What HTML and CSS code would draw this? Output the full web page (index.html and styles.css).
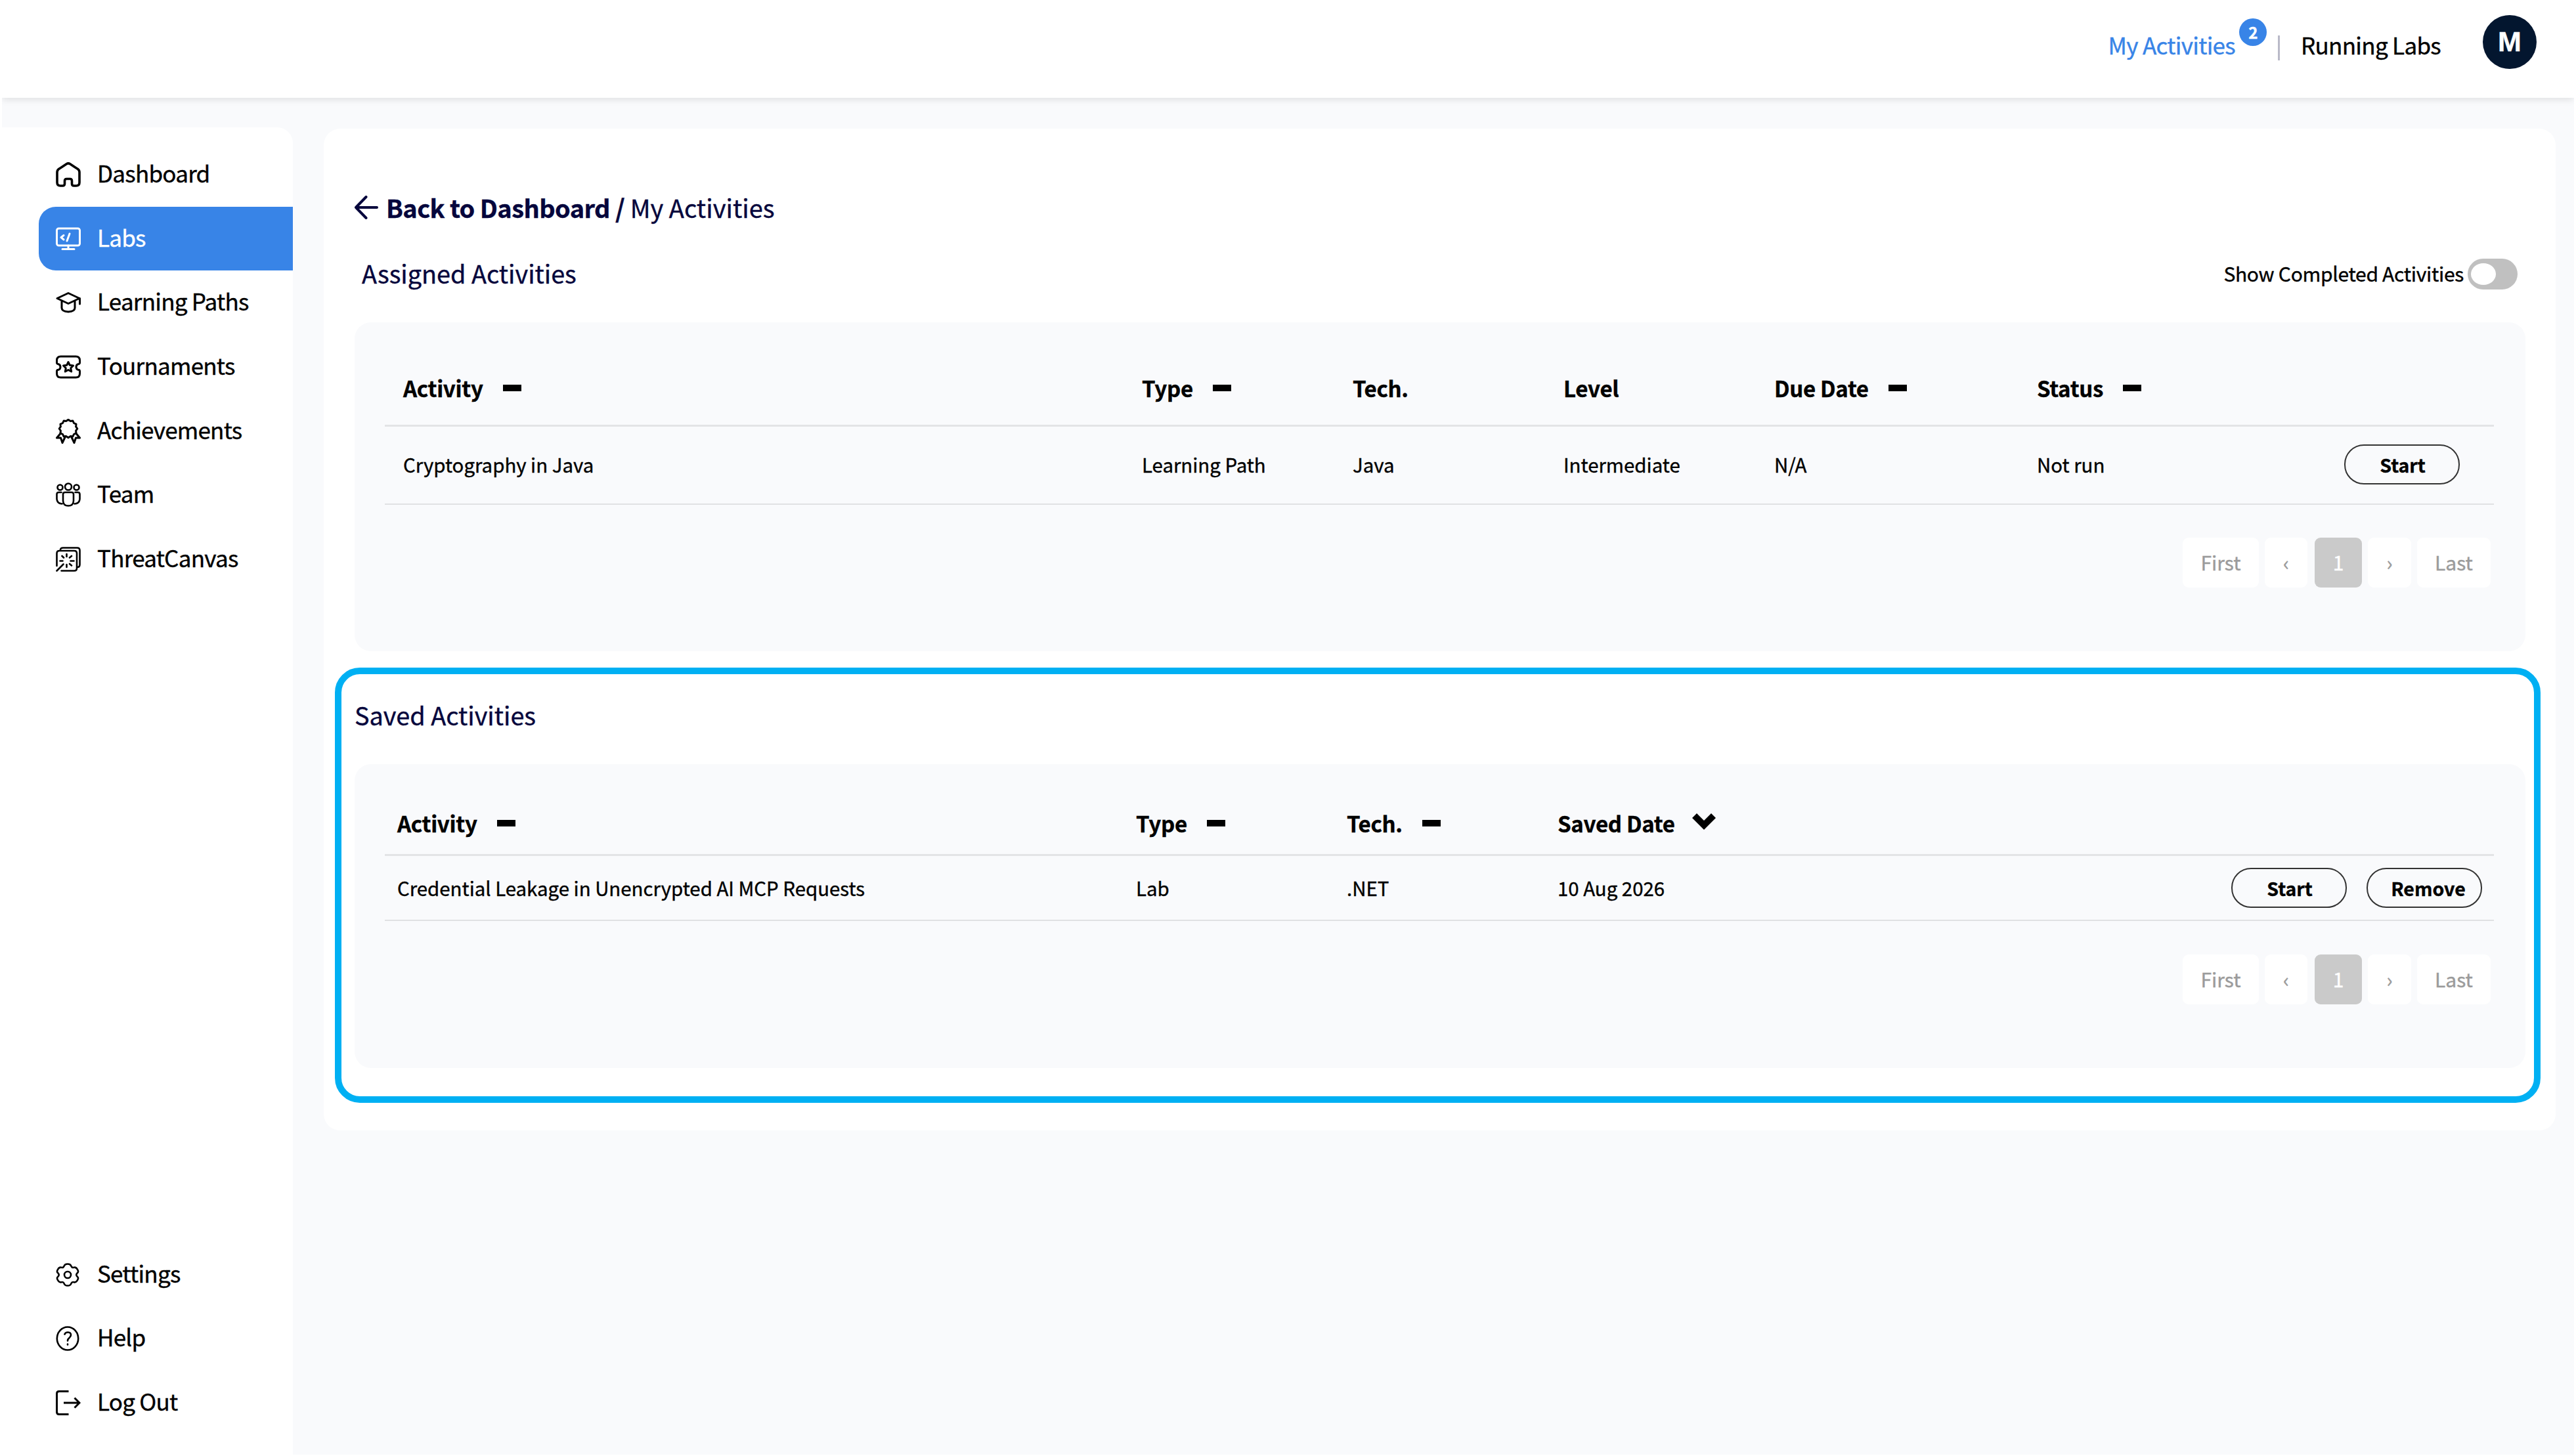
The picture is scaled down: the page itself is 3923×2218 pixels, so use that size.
FILE: index.html
```html
<!DOCTYPE html>
<html lang="en">
  <head>
    <meta charset="UTF-8">
    <title>My Activities</title>
    <link rel="stylesheet" href="styles.css">
  </head>
  <body>
    <header class="topbar">
      <a class="top-link current"><span>My Activities</span><span class="badge">2</span></a>
      <span class="divider"></span>
      <a class="top-link">Running Labs</a>
      <span class="avatar">M</span>
    </header>

    <div class="layout">
      <nav class="sidebar">
        <ul class="menu">
          <li class="item">
            <svg class="icon bold" viewBox="0 0 38 38"><path d="M16.300 2.800L4.500 10.600Q2 12.300 2 15.500V31Q2 36 7 36H10.500Q13.500 36 13.500 33V28.500Q13.500 25.500 16.500 25.500H21.500Q24.500 25.500 24.500 28.500V33Q24.500 36 27.500 36H31Q36 36 36 31V15.500Q36 12.300 33.500 10.600L21.700 2.800Q19 1.100 16.300 2.800Z"/></svg>
            <span class="label">Dashboard</span>
          </li>
          <li class="item active">
            <svg class="icon" viewBox="0 0 38 38"><rect x="1.500" y="3" width="35" height="26" rx="3"/><path d="M19 29V34M10 34.500H28M12 13.500L8 16.700L12 20M21 11L17 22"/></svg>
            <span class="label">Labs</span>
          </li>
          <li class="item">
            <svg class="icon" viewBox="0 0 38 38"><path d="M19 4.500L2 12.500L19 20.500L36 12.500ZM36.500 12.500V21M9 16V27Q9 32.500 19 33Q29 32.500 29 27V16"/></svg>
            <span class="label">Learning Paths</span>
          </li>
          <li class="item">
            <svg class="icon" viewBox="0 0 38 38"><path d="M7.500 3H30.500Q36.500 3 36.500 9V12.500Q36.500 14.500 34 14.700Q31 15.500 31 19Q31 22.500 34 23.300Q36.500 23.500 36.500 25.500V29Q36.500 35 30.500 35H7.500Q1.500 35 1.500 29V25.500Q1.500 23.500 4 23.300Q7 22.500 7 19Q7 15.500 4 14.700Q1.500 14.500 1.500 12.500V9Q1.500 3 7.500 3Z"/><path d="M19 11.500L21.300 16.300L26.500 17L22.700 20.700L23.700 26L19 23.500L14.300 26L15.300 20.700L11.500 17L16.700 16.300Z"/></svg>
            <span class="label">Tournaments</span>
          </li>
          <li class="item">
            <svg class="icon" viewBox="0 0 38 38"><path transform="translate(19 15)" d="M0 -13.800L3.100 -11.600L6.900 -12L8.500 -8.500L12 -6.900L11.600 -3.100L13.800 0L11.600 3.100L12 6.900L8.500 8.500L6.900 12L3.100 11.600L0 13.800L-3.100 11.600L-6.900 12L-8.500 8.500L-12 6.900L-11.600 3.100L-13.800 0L-11.600 -3.100L-12 -6.900L-8.500 -8.500L-6.900 -12L-3.100 -11.600Z"/><path d="M7 22.500L1.500 29L7.500 29L10 36.500L14.500 27M31 22.500L36.500 29L30.500 29L28 36.500L23.500 27"/></svg>
            <span class="label">Achievements</span>
          </li>
          <li class="item">
            <svg class="icon thin" viewBox="0 0 38 38"><circle cx="19" cy="6.500" r="5"/><circle cx="6.500" cy="7.500" r="4"/><circle cx="31.500" cy="7.500" r="4"/><path d="M14 15H24Q27 15 27 18V28Q26.500 35.500 19 35.500Q11.500 35.500 11 28V18Q11 15 14 15ZM8.500 15H4.500Q1.500 15 1.500 18V25Q2 32 9.500 32.500M29.500 15H33.500Q36.500 15 36.500 18V25Q36 32 28.500 32.500"/></svg>
            <span class="label">Team</span>
          </li>
          <li class="item">
            <svg class="icon thin" viewBox="0 0 38 38"><path d="M1.500 29V10Q1.500 6 5.500 6H28Q32 6 32 10V32.500Q32 36.500 28 36.500H8.500M7 4.500Q7 1.500 11 1.500H32.500Q36.500 1.500 36.500 5.500V27Q36.500 31 33 31M1.500 36.500L11.500 26.500M16.500 11V15M16.500 27V31M6.500 21.500H10.500M22.500 21.500H27.500M9.500 14L12 16.500M21 26L24 28.500M21 16.500L24 14"/></svg>
            <span class="label">ThreatCanvas</span>
          </li>
        </ul>
        <ul class="menu">
          <li class="item">
            <svg class="icon thin" viewBox="0 0 38 38"><path transform="translate(18 19)" d="M-5.500 -13Q-4.500 -16.500 0 -16.500Q4.500 -16.500 5.500 -13Q6.500 -10.500 9.500 -11.200Q13 -12 15 -8Q17.300 -4.500 14.500 -2.500Q12 0 14.500 2.500Q17.300 4.500 15 8Q13 12 9.500 11.200Q6.500 10.500 5.500 13Q4.500 16.500 0 16.500Q-4.500 16.500 -5.500 13Q-6.500 10.500 -9.500 11.200Q-13 12 -15 8Q-17.300 4.500 -14.500 2.500Q-12 0 -14.500 -2.500Q-17.300 -4.500 -15 -8Q-13 -12 -9.500 -11.200Q-6.500 -10.500 -5.500 -13Z"/><circle cx="18" cy="19" r="5"/></svg>
            <span class="label">Settings</span>
          </li>
          <li class="item">
            <svg class="icon thin" viewBox="0 0 38 38"><ellipse cx="18" cy="19" rx="16.200" ry="17.500"/><path d="M13.500 12.500Q14.500 9.500 18.500 9.500Q23 9.800 23 13.500Q23 16 20.500 18Q18 20 18 22.500M18 27.500V28.500"/></svg>
            <span class="label">Help</span>
          </li>
          <li class="item">
            <svg class="icon" viewBox="0 0 38 38"><path class="square" d="M19.500 1.500H5Q1.500 1.500 1.500 5V33Q1.500 36.500 5 36.500H19.500M12 19H36M28.500 11.500L36 19L28.500 26.500"/></svg>
            <span class="label">Log Out</span>
          </li>
        </ul>
      </nav>

      <main class="card">
        <div class="crumbs">
          <svg class="back" viewBox="0 0 36 36"><path d="M34 18H2M17.500 2L2 18L17.500 34"/></svg>
          <b class="crumb-link">Back to Dashboard</b>
          <b class="slash">/</b>
          <span>My Activities</span>
        </div>

        <div class="section-head">
          <h2 class="title">Assigned Activities</h2>
          <div class="switch-row"><span class="switch-label">Show Completed Activities</span><span class="switch"><span class="knob"></span></span></div>
        </div>
        <section class="panel assigned">
          <table class="grid">
            <colgroup><col class="c-name"><col class="c-mid"><col class="c-mid"><col class="c-mid"><col class="c-due"><col></colgroup>
            <tr>
              <th>Activity<i class="dash"></i></th>
              <th>Type<i class="dash"></i></th>
              <th>Tech.</th>
              <th>Level</th>
              <th>Due Date<i class="dash"></i></th>
              <th>Status<i class="dash"></i></th>
            </tr>
            <tr>
              <td>Cryptography in Java</td>
              <td>Learning Path</td>
              <td>Java</td>
              <td>Intermediate</td>
              <td>N/A</td>
              <td><div class="last-cell"><span>Not run</span><button class="btn">Start</button></div></td>
            </tr>
          </table>
          <div class="pager">
            <span class="page first">First</span>
            <span class="page prev">‹</span>
            <span class="page on">1</span>
            <span class="page next">›</span>
            <span class="page last">Last</span>
          </div>
        </section>

        <div class="highlight">
          <h2 class="title">Saved Activities</h2>
          <section class="panel saved">
            <table class="grid">
              <colgroup><col class="c-name"><col class="c-mid"><col class="c-mid"><col></colgroup>
              <tr>
                <th>Activity<i class="dash"></i></th>
                <th>Type<i class="dash"></i></th>
                <th>Tech.<i class="dash"></i></th>
                <th>Saved Date<svg class="chevron" viewBox="0 0 36 25"><path d="M0 7L7 0L18 11L29 0L36 7L18 25Z"/></svg></th>
              </tr>
              <tr>
                <td>Credential Leakage in Unencrypted AI MCP Requests</td>
                <td>Lab</td>
                <td>.NET</td>
                <td><div class="last-cell"><span>10 Aug 2026</span><span class="actions"><button class="btn">Start</button><button class="btn remove">Remove</button></span></div></td>
              </tr>
            </table>
            <div class="pager">
              <span class="page first">First</span>
              <span class="page prev">‹</span>
              <span class="page on">1</span>
              <span class="page next">›</span>
              <span class="page last">Last</span>
            </div>
          </section>
        </div>
      </main>
    </div>
  </body>
</html>
```
FILE: styles.css
```css
* {
  box-sizing: border-box;
}
html {
  background: #fff;
}
body {
  margin: 0 3px;
  height: 2216px;
  background: #f9fafc;
  color: #000;
  font-family: "Noto Sans CJK SC", "Noto Sans", sans-serif;
  font-size: 35px;
  line-height: 40px;
  -webkit-text-stroke: 0.4px;
}
.topbar {
  display: flex;
  align-items: flex-start;
  justify-content: flex-end;
  height: 149px;
  padding-right: 57px;
  background: #fff;
  box-shadow: 0 3px 10px rgba(0, 0, 0, 0.1);
}
.top-link {
  display: flex;
  padding-top: 48px;
  letter-spacing: -0.7px;
}
.current {
  color: #3884e7;
}
.badge {
  width: 42px;
  height: 42px;
  margin: -20px 0 0 6px;
  border-radius: 50%;
  background: #3884e7;
  color: #fff;
  font-size: 24px;
  font-weight: 700;
  line-height: 42px;
  text-align: center;
}
.divider {
  width: 3px;
  height: 38px;
  margin: 54px 32px 0 17px;
  background: #b9b9c8;
}
.avatar {
  width: 82px;
  height: 82px;
  margin: 23px 0 0 64px;
  border-radius: 50%;
  background: #03162f;
  color: #fff;
  font: bold 43px/80px "Liberation Sans", Arial, sans-serif;
  text-align: center;
}

.layout {
  display: flex;
  align-items: flex-start;
}
.sidebar {
  display: flex;
  flex-direction: column;
  justify-content: space-between;
  width: 443px;
  height: 2022px;
  margin-top: 45px;
  padding: 23px 0 30px 56px;
  border-top-right-radius: 24px;
  background: #fff;
}
.menu {
  margin: 0;
  padding: 0;
  list-style: none;
}
.item {
  display: flex;
  align-items: center;
  height: 97.7px;
  padding-left: 26px;
}
.active {
  border-radius: 26px 0 0 26px;
  background: #3884e7;
  color: #fff;
}
.icon {
  width: 38px;
  height: 38px;
  margin-right: 25px;
  fill: none;
  stroke: currentColor;
  stroke-width: 3;
  stroke-linecap: round;
  stroke-linejoin: round;
}
.icon.bold {
  stroke-width: 3.6;
}
.icon.thin {
  stroke-width: 2.6;
}
.square {
  stroke-linecap: butt;
  stroke-linejoin: miter;
}
.label {
  padding-bottom: 6px;
  letter-spacing: -0.75px;
}

.card {
  width: 3399px;
  height: 1526px;
  margin: 47px 0 0 47px;
  padding: 99px 23px 0 17px;
  border-radius: 25px;
  background: #fff;
}
.crumbs {
  display: flex;
  align-items: center;
  height: 41px;
  padding-left: 30px;
  color: #06063c;
  font-size: 38px;
}
.back {
  width: 36px;
  height: 36px;
  margin-right: 12px;
  fill: none;
  stroke: currentColor;
  stroke-width: 4;
  stroke-linecap: round;
  stroke-linejoin: round;
}
.crumb-link {
  letter-spacing: -0.6px;
}
.slash {
  margin: 0 8px;
}
.section-head {
  display: flex;
  align-items: center;
  justify-content: space-between;
  height: 50px;
  margin-top: 56px;
  padding: 0 35px 0 41px;
}
.title {
  margin: 0;
  padding-bottom: 2px;
  color: #06063c;
  font-size: 37.8px;
  font-weight: 400;
}
.switch-row {
  display: flex;
  align-items: center;
  gap: 6px;
  font-size: 30px;
}
.switch-label {
  padding-bottom: 3px;
  letter-spacing: -0.3px;
}
.switch {
  width: 76px;
  height: 47px;
  padding: 7px 5px;
  border-radius: 24px;
  background: #c0c0c0;
}
.knob {
  display: block;
  width: 38px;
  height: 33px;
  border-radius: 50%;
  background: #fff;
}

.panel {
  padding: 56px 48px 0 46px;
  border-radius: 25px;
  background: #f9fafc;
}
.assigned {
  width: 3306px;
  height: 501px;
  margin: 49px 0 0 30px;
}
.grid {
  width: 100%;
  table-layout: fixed;
  border-spacing: 0;
  text-align: left;
}
.c-name {
  width: 1125px;
}
.c-mid {
  width: 321px;
}
.c-due {
  width: 400px;
}
th {
  height: 103px;
  padding: 24px 0 36px 28px;
  border-bottom: 3px solid #e3e4e6;
  font-size: 33px;
  font-weight: 700;
  letter-spacing: -0.3px;
}
td {
  height: 119px;
  padding: 0 0 3px 28px;
  border-bottom: 2px solid #e0e1e3;
  font-size: 29.4px;
}
.dash {
  display: inline-block;
  width: 28px;
  height: 10px;
  margin-left: 30px;
  background: #000;
  vertical-align: 9px;
}
.chevron {
  width: 36px;
  height: 25px;
  margin-left: 26px;
  vertical-align: 4px;
}
.last-cell {
  display: flex;
  align-items: center;
  justify-content: space-between;
  padding-right: 52px;
}
.actions {
  display: flex;
  gap: 30px;
}
.btn {
  width: 176px;
  height: 61px;
  padding: 0 0 0 2px;
  border: 2px solid #333;
  border-radius: 30px;
  background: none;
  color: #000;
  font: bold 28.5px/55px "Noto Sans CJK SC", sans-serif;
}
.remove {
  padding-left: 12px;
}

.pager {
  display: flex;
  margin-top: 50px;
  justify-content: flex-end;
  padding-right: 5px;
  color: #9b9b9b;
  font-size: 30px;
  line-height: 75px;
  text-align: center;
}
.page {
  height: 76px;
  border-radius: 9px;
  background: #fff;
}
.first {
  width: 116px;
  margin-right: 9px;
}
.prev {
  width: 65px;
  margin-right: 11px;
}
.on {
  width: 72px;
  margin-right: 9px;
  background: #cacaca;
  color: #fff;
}
.next {
  width: 66px;
  margin-right: 9px;
}
.last {
  width: 112px;
}

/* frame round the saved activities */
.highlight {
  width: 3359px;
  height: 663px;
  margin-top: 25px;
  padding: 42px 12px 0 20px;
  border: 10px solid #00b0f3;
  border-radius: 38px;
}
.saved {
  width: 3306px;
  height: 463px;
  margin-top: 53px;
}
.saved th,
.saved td {
  padding-left: 19px;
}
.saved th {
  height: 84px;
  padding-top: 14px;
  padding-bottom: 27px;
}
.saved td {
  height: 99px;
  padding-bottom: 1px;
}
.saved .last-cell {
  padding-right: 18px;
}
.saved .pager {
  margin-top: 51px;
}
```
